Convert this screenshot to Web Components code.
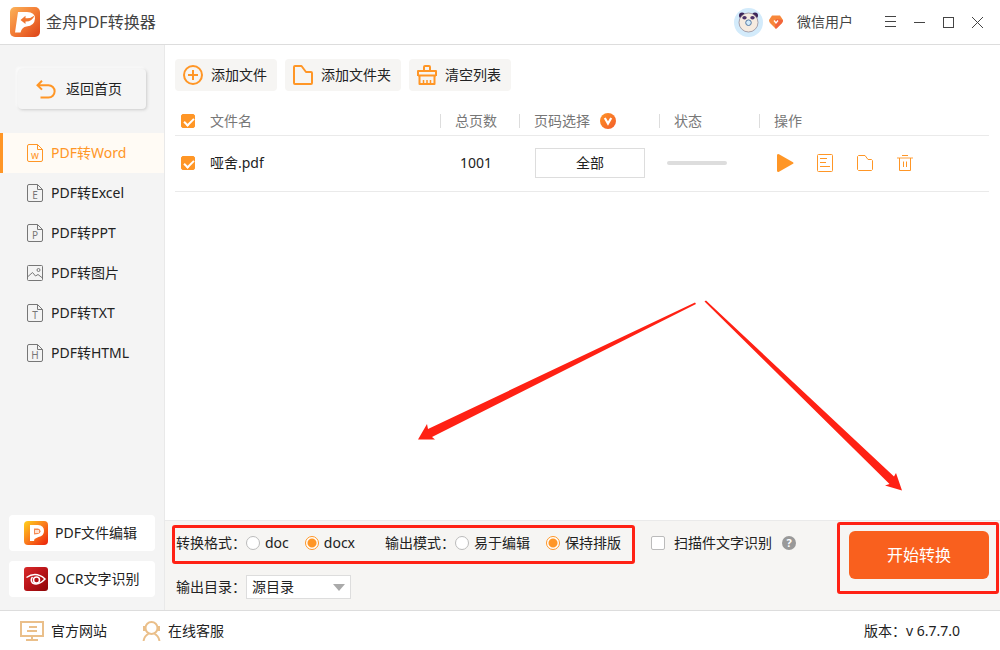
<!DOCTYPE html>
<html lang="zh-CN">
<head>
<meta charset="utf-8">
<meta name="viewport" content="width=device-width, initial-scale=1">
<title>金舟PDF转换器</title>
<style>
  html, body { margin: 0; }
  body {
    font: 14px/20px "Noto Sans", "Noto Sans CJK SC", sans-serif;
    color: #222;
    --accent: #ff9626;
    --action: #f9601e;
    --mark: #ff2114;
    --panel: #f6f5f3;
  }
</style>
</head>
<body>
<app-window></app-window>

<script>
const define = (tag, html, setup) => {
  const template = document.createElement('template');
  template.innerHTML = `<style>*{box-sizing:border-box}button{font:inherit;color:inherit;cursor:pointer}</style>` + html;
  customElements.define(tag, class extends HTMLElement {
    constructor() {
      super();
      this.attachShadow({ mode: 'open' }).append(template.content.cloneNode(true));
    }
    connectedCallback() { if (setup) setup.call(this, this.shadowRoot); }
  });
};

/* ---------- icons ---------- */
const page = letter => [16, 18, `<g fill="none" stroke="currentColor"><path d="M10.500 .5H2Q.5 .5 .5 2V16Q.5 17.500 2 17.500H14Q15.500 17.500 15.500 16V5.500Z"/><path d="M10.500 .5V5.500H15.500"/></g><text x="8" y="15" text-anchor="middle" font-size="10" fill="currentColor">${letter}</text>`];
const ICONS = {
  logo: [30, 30, `<defs><linearGradient id="a" x1="0" y1="0" x2="1" y2="1"><stop stop-color="#fbb35a"/><stop offset=".5" stop-color="#f37c35"/><stop offset="1" stop-color="#dc4218"/></linearGradient></defs><rect width="30" height="30" rx="5" fill="url(#a)"/><path fill="#fff" d="M8 5H17Q25 5 25 11.500Q24.500 19 16.500 19.500Q12 20 10.500 25.500H5Z"/><path fill="#f0752f" d="M10.500 13L15.500 8.800V11.200Q20 12 24.600 8.500Q22 14.800 15.500 14.500V17Z"/>`],
  panda: [29, 29, `<circle cx="14.500" cy="14.500" r="14.500" fill="#d3ebfb"/><circle cx="8" cy="7.500" r="3" fill="#3c2358"/><circle cx="21" cy="7.500" r="3" fill="#3c2358"/><circle cx="14.500" cy="14.500" r="9.500" fill="#f6ebe0" stroke="#8d7f8d" stroke-width=".7"/><ellipse cx="10.500" cy="9.800" rx="2.200" ry="1.800" fill="#4c3268"/><ellipse cx="18.500" cy="9.800" rx="2.200" ry="1.800" fill="#4c3268"/><circle cx="14.500" cy="14.700" r="2.800" fill="#d3ebfb" stroke="#5579a3"/>`],
  gem: [14, 14, `<path fill="#f8873a" d="M3 .5H11L14 5Q14 7 12.500 8.500L8 13Q7 14 6 13L1.500 8.500Q0 7 0 5Z"/><path fill="#f2643c" d="M7 4L14 5Q14 7 12.500 8.500L8 13Q7 14 6 13Z"/><path d="M5 5.500L7 8L9 5.500" fill="none" stroke="#fff" stroke-width="1.300"/>`],
  menu: [11, 12, `<path d="M0 .5H11M0 5.500H11M0 10.500H11" stroke="currentColor"/>`],
  minimize: [11, 11, `<path d="M0 5.500H11" stroke="currentColor"/>`],
  maximize: [11, 11, `<rect x=".5" y=".5" width="10" height="10" fill="none" stroke="currentColor"/>`],
  close: [11, 11, `<path d="M0 0L11 11M11 0L0 11" stroke="currentColor"/>`],
  back: [20, 19, `<path fill="none" stroke="currentColor" stroke-width="2" d="M6 .8L1.500 5.200L6 9.600M1.500 5.200H12.500A6 6 0 0 1 12.500 17.500H4.500"/>`],
  word: page('w'), excel: page('E'), ppt: page('P'), txt: page('T'), html: page('H'),
  image: [16, 16, `<g fill="none" stroke="currentColor"><rect x=".5" y=".5" width="15" height="15" rx="1"/><circle cx="11.500" cy="5" r="1.500"/><path d="M1 11.500L5.500 7.500L8.500 11L11 9.500L15.500 13"/></g>`],
  add: [20, 20, `<g fill="none" stroke="currentColor" stroke-width="2"><circle cx="10" cy="10" r="9"/><path d="M5 10H15M10 5V15"/></g>`],
  folder: [20, 20, `<path fill="none" stroke="currentColor" stroke-width="2" stroke-linejoin="round" d="M1 2Q1 1 2 1H8.500L13 7H18Q19 7 19 8V18Q19 19 18 19H2Q1 19 1 18Z"/>`],
  brush: [20, 20, `<g fill="none" stroke="currentColor" stroke-width="2" stroke-linejoin="round"><path d="M7 6V2Q7 1 8 1H12Q13 1 13 2V6M1 11V6H19V11M1 10.500H19M2.500 11V19H17.500V11"/><path d="M6.500 19V15M10 19V15M13.500 19V15" stroke-width="1.500"/></g>`],
  vip: [16, 16, `<defs><linearGradient id="v" x1="0" y1="0" x2="1" y2="1"><stop stop-color="#ff9426"/><stop offset="1" stop-color="#f25b2a"/></linearGradient></defs><circle cx="8" cy="8" r="8" fill="url(#v)"/><path fill="none" stroke="#fff" stroke-width="2.200" d="M4.800 5L8 10.500L11.200 5"/>`],
  play: [17, 18, `<path fill="currentColor" d="M0 1Q.5 -.3 2 .3L16 8.200Q17 9 16 9.800L2 17.700Q.5 18.300 0 17Z"/>`],
  details: [16, 18, `<g fill="none" stroke="currentColor"><rect x=".5" y=".5" width="15" height="17" rx="1"/><path d="M3 4.500H10M3 8.500H9M3 12.500H13"/></g>`],
  open: [16, 16, `<path fill="none" stroke="currentColor" stroke-linejoin="round" d="M1.500 .5H8L11 4.500H14.500L15.500 5.500V14.500L14.500 15.500H1.500L.5 14.500V1.500Z"/>`],
  trash: [16, 16, `<g fill="none" stroke="currentColor"><path d="M5 .5H11M2.500 3V15.500H13.500V3M6.500 6.500V12M9.500 6.500V12"/><path d="M0 3H16" stroke-width="1.500" opacity=".6"/></g>`],
  editor: [24, 24, `<defs><linearGradient id="e" x1="0" y1="0" x2="1" y2="1"><stop stop-color="#ffd21c"/><stop offset=".5" stop-color="#fa7a1c"/><stop offset="1" stop-color="#ea1e0a"/></linearGradient></defs><rect width="24" height="24" rx="4" fill="url(#e)"/><path fill="#fff" d="M6 4H14Q20 4.500 20 10Q20 15 14.500 16L10.500 18L10 20H6Z"/><path fill="#f58a52" d="M10 7.500H14Q16.500 8 16.500 10.200Q16.500 12.500 14 13L10 13.500Z"/><path fill="#fff" opacity=".75" d="M11 9H15V12H11Z"/>`],
  eye: [24, 24, `<defs><linearGradient id="o" x1="0" y1="0" x2="1" y2="1"><stop stop-color="#d92a2a"/><stop offset=".5" stop-color="#b81318"/><stop offset="1" stop-color="#8c0709"/></linearGradient></defs><rect width="24" height="24" rx="3" fill="url(#o)"/><g fill="none" stroke="#fff" stroke-width="1.500"><path d="M2.500 10.500Q12 4 21 12Q14.500 19 8.500 16Q6 13 8.500 10"/><circle cx="12.500" cy="13" r="3"/></g>`],
  site: [24, 20, `<g fill="none" stroke="currentColor" stroke-width="2"><path d="M1 1H23V15H1ZM12 15V19M6 19H18M9 6H17M7 10H17"/></g>`],
  service: [19, 20, `<g fill="none" stroke="currentColor" stroke-width="2"><circle cx="9.500" cy="7" r="6"/><path d="M1.500 20Q2.500 14.500 6.500 12.800M12.500 12.800Q16.500 14.500 17.500 20"/></g><path fill="currentColor" d="M1 5H3.500V10H1ZM15.500 5H18V10H15.500Z"/>`],
  help: [14, 14, `<circle cx="7" cy="7" r="7" fill="#999"/><text x="7" y="11" text-anchor="middle" font-size="11" font-weight="700" fill="#fff">?</text>`],
};
define('ui-icon', `<style>:host{display:inline-flex;flex:none}svg{display:block}</style>`, function (root) {
  const [w, h, body] = ICONS[this.getAttribute('name')];
  root.innerHTML += `<svg width="${w}" height="${h}" viewBox="0 0 ${w} ${h}" aria-hidden="true">${body}</svg>`;
});

/* ---------- title bar ---------- */
define('title-bar', `
<style>
  :host { display: flex; align-items: center; height: 45px; padding: 0 8px 0 10px; border-bottom: 1px solid #ddd; background: #fff; color: #444; }
  h1 { flex: 1; margin: 0 0 0 6px; font-size: 16px; line-height: 24px; font-weight: 400; }
  .user { display: flex; align-items: center; gap: 6px; margin-right: 23px; }
  .user span { margin-left: 8px; }
  button { display: flex; align-items: center; justify-content: center; width: 29px; height: 28px; padding: 0; border: 0; background: none; }
</style>
<ui-icon name="logo"></ui-icon>
<h1>金舟PDF转换器</h1>
<div class="user"><ui-icon name="panda"></ui-icon><ui-icon name="gem"></ui-icon><span>微信用户</span></div>
<button aria-label="菜单"><ui-icon name="menu"></ui-icon></button>
<button aria-label="最小化"><ui-icon name="minimize"></ui-icon></button>
<button aria-label="最大化"><ui-icon name="maximize"></ui-icon></button>
<button aria-label="关闭"><ui-icon name="close"></ui-icon></button>`);

/* ---------- sidebar ---------- */
define('nav-item', `
<style>
  :host { display: block; }
  a { display: flex; align-items: center; gap: 8px; height: 40px; padding-left: 24px; border-left: 3px solid transparent; color: #222; text-decoration: none; }
  .icon { display: flex; color: #777; }
  :host([active]) a { background: #fffbf5; border-color: var(--accent); color: var(--accent); }
  :host([active]) .icon { color: inherit; }
</style>
<a href="#"><span class="icon"></span><slot></slot></a>`, function (root) {
  root.querySelector('.icon').innerHTML = `<ui-icon name="${this.getAttribute('icon')}"></ui-icon>`;
});

define('side-bar', `
<style>
  :host { display: flex; flex-direction: column; width: 165px; flex: none; border-right: 1px solid #e9e9e9; background: #f4f4f4; }
  .back { display: flex; align-items: center; gap: 10px; height: 40px; margin: 24px 18px; padding: 0 18px; border: 0; border-radius: 4px; background: #f5f5f5; box-shadow: 1px 1px 3px #ccc, -2px -2px 2px #fbfbfb; }
  .back ui-icon { color: var(--accent); }
  nav { flex: 1; }
  .apps { display: flex; flex-direction: column; gap: 10px; padding: 13px 9px; }
  .apps button { display: flex; align-items: center; gap: 7px; height: 36px; padding: 0 15px; border: 0; border-radius: 4px; background: #fff; white-space: nowrap; }
</style>
<button class="back"><ui-icon name="back"></ui-icon>返回首页</button>
<nav>
  <nav-item icon="word" active>PDF转Word</nav-item>
  <nav-item icon="excel">PDF转Excel</nav-item>
  <nav-item icon="ppt">PDF转PPT</nav-item>
  <nav-item icon="image">PDF转图片</nav-item>
  <nav-item icon="txt">PDF转TXT</nav-item>
  <nav-item icon="html">PDF转HTML</nav-item>
</nav>
<div class="apps">
  <button><ui-icon name="editor"></ui-icon>PDF文件编辑</button>
  <button><ui-icon name="eye"></ui-icon>OCR文字识别</button>
</div>`);

/* ---------- toolbar and file list ---------- */
define('tool-bar', `
<style>
  :host { display: flex; gap: 8px; padding: 14px 10px; }
  button { display: flex; align-items: center; gap: 8px; height: 32px; padding: 0 10px 0 8px; border: 0; border-radius: 4px; background: var(--panel); }
  ui-icon { color: var(--accent); }
</style>
<button><ui-icon name="add"></ui-icon>添加文件</button>
<button><ui-icon name="folder"></ui-icon>添加文件夹</button>
<button><ui-icon name="brush"></ui-icon>清空列表</button>`);

const CHECKBOX = `
  input[type=checkbox] { appearance: none; display: block; flex: none; width: 14px; height: 14px; margin: 0; border: 1px solid #bbb; border-radius: 2px; background: #fff; }
  input[type=checkbox]:checked { border-color: var(--accent); background: var(--accent); }
  input[type=checkbox]:checked::before { content: ""; display: block; width: 8px; height: 4px; margin: 3px 2px; border: solid #fff; border-width: 0 0 2px 2px; transform: rotate(-45deg); }`;

define('file-table', `
<style>
  :host { display: block; padding: 0 11px 0 10px; }
  ${CHECKBOX}
  table { width: 100%; border-collapse: collapse; table-layout: fixed; }
  th, td { padding: 0; text-align: left; font-weight: 400; border-bottom: 1px solid #eaeaea; }
  th { height: 30px; padding-top: 2px; color: #777; }
  td { height: 56px; }
  .check { width: 35px; padding-left: 6px; }
  .pages { width: 79px; } .range { width: 140px; } .state { width: 100px; } .ops { width: 230px; }
  th div { display: flex; align-items: center; gap: 10px; height: 14px; padding-left: 14px; border-left: 1px solid #ddd; }
  td.pages { padding-left: 20px; }
  td.range { padding-left: 16px; }
  .range button { display: block; width: 110px; height: 30px; padding: 0; border: 1px solid #ddd; background: #fff; }
  td.state { padding-left: 8px; }
  progress { appearance: none; display: block; width: 60px; height: 4px; border: 0; border-radius: 2px; background: #ddd; overflow: hidden; }
  progress::-webkit-progress-bar { background: #ddd; }
  td.ops div { display: flex; gap: 16px; padding-left: 14px; color: var(--accent); }
  td.ops button { display: flex; align-items: center; justify-content: center; width: 24px; height: 24px; padding: 0; border: 0; background: none; }
</style>
<table>
  <thead><tr>
    <th class="check"><input type="checkbox" checked aria-label="全选"></th>
    <th>文件名</th>
    <th class="pages"><div>总页数</div></th>
    <th class="range"><div>页码选择<ui-icon name="vip"></ui-icon></div></th>
    <th class="state"><div>状态</div></th>
    <th class="ops"><div>操作</div></th>
  </tr></thead>
  <tbody><tr>
    <td class="check"><input type="checkbox" checked aria-label="选择文件"></td>
    <td>哑舍.pdf</td>
    <td class="pages">1001</td>
    <td class="range"><button>全部</button></td>
    <td class="state"><progress value="0" max="100" aria-label="状态"></progress></td>
    <td class="ops"><div>
      <button aria-label="开始"><ui-icon name="play"></ui-icon></button>
      <button aria-label="详情"><ui-icon name="details"></ui-icon></button>
      <button aria-label="打开文件夹"><ui-icon name="open"></ui-icon></button>
      <button aria-label="删除"><ui-icon name="trash"></ui-icon></button>
    </div></td>
  </tr></tbody>
</table>`);

/* ---------- conversion options ---------- */
define('radio-group', `
<style>
  :host { display: block; }
  fieldset { display: flex; align-items: center; margin: 0; padding: 0; border: 0; min-width: 0; }
  .choices { display: flex; gap: 16px; }
  label { display: flex; align-items: center; gap: 5px; white-space: nowrap; }
  .caption { white-space: nowrap; }
  input { appearance: none; width: 14px; height: 14px; margin: 0; border: 1px solid #bbb; border-radius: 50%; background: #fff; }
  input:checked { border-color: var(--accent); background: radial-gradient(circle, var(--accent) 4px, #fff 5px); }
</style>
<fieldset><span class="caption"><slot></slot></span><div class="choices"></div></fieldset>`, function (root) {
  root.querySelector('fieldset').setAttribute('aria-label', this.textContent);
  root.querySelector('.choices').innerHTML = this.getAttribute('options').split(',').map(o =>
    `<label><input type="radio" name="choice" value="${o}"${o === this.getAttribute('value') ? ' checked' : ''}>${o}</label>`).join('');
});

/* Red frame drawn around whatever is slotted in. */
define('mark-frame', `
<style>
  :host { display: flex; position: relative; }
  i { position: absolute; inset: var(--frame-inset); border: 3px solid var(--mark); border-radius: 3px; pointer-events: none; }
</style>
<slot></slot><i></i>`);

define('options-panel', `
<style>
  :host { display: flex; align-items: flex-start; justify-content: space-between; height: 90px; padding: 10px 11px 0; border-top: 1px solid #eaeaea; background: var(--panel); }
  ${CHECKBOX}
  .settings { display: flex; flex-direction: column; gap: 20px; }
  .row { display: flex; align-items: center; height: 24px; }
  .formats { gap: 30px; --frame-inset: -8px -14px -11px -4px; }
  .scan { display: flex; align-items: center; gap: 9px; margin: 0 10px 0 30px; white-space: nowrap; }
  .select { position: relative; }
  select { appearance: none; display: block; width: 105px; height: 24px; padding: 0 5px; border: 1px solid #ddd; border-radius: 0; background: #fff; color: inherit; font: inherit; }
  .select svg { position: absolute; right: 6px; top: 9px; pointer-events: none; }
  .start { --frame-inset: -9px -10px -15px -12px; }
  .start button { width: 140px; height: 48px; padding: 0; border: 0; border-radius: 6px; background: var(--action); color: #fff; font-size: 16px; }
</style>
<div class="settings">
  <div class="row">
    <mark-frame class="formats">
      <radio-group options="doc,docx" value="docx">转换格式：</radio-group>
      <radio-group options="易于编辑,保持排版" value="保持排版">输出模式：</radio-group>
    </mark-frame>
    <label class="scan"><input type="checkbox">扫描件文字识别</label>
    <ui-icon name="help"></ui-icon>
  </div>
  <div class="row">
    <label for="dir">输出目录：</label>
    <div class="select">
      <select id="dir"><option>源目录</option></select>
      <svg width="12" height="7" viewBox="0 0 12 7" aria-hidden="true"><path d="M0 0H12L6 7Z" fill="#aaa"/></svg>
    </div>
  </div>
</div>
<mark-frame class="start"><button>开始转换</button></mark-frame>`);

/* ---------- pointer arrows over the empty part of the list ---------- */
define('pointer-arrows', `
<style>
  :host { display: block; position: absolute; inset: 0; pointer-events: none; }
  svg { display: block; width: 100%; height: 100%; fill: var(--mark); }
</style>
<svg viewBox="165 45 835 475" preserveAspectRatio="xMaxYMax meet" aria-hidden="true">
  <path d="M695 302.500L696 304L432 437L435 439.500L418 439.500L427 424L428 429Z"/>
  <path d="M704.500 301.500L706 300.500L894 476.500L896 473L902 490.500L885 485.500L889.500 484Z"/>
</svg>`);

/* ---------- footer ---------- */
define('app-footer', `
<style>
  :host { display: flex; align-items: center; gap: 35px; height: 40px; padding: 0 40px 0 20px; border-top: 1px solid #ddd; background: #fff; }
  a { display: flex; align-items: center; gap: 7px; color: inherit; text-decoration: none; }
  ui-icon { color: #eabf8a; }
  span { margin-left: auto; }
</style>
<a href="#"><ui-icon name="site"></ui-icon>官方网站</a>
<a href="#"><ui-icon name="service"></ui-icon>在线客服</a>
<span>版本：v 6.7.7.0</span>`);

define('app-window', `
<style>
  :host { display: flex; flex-direction: column; min-height: 100vh; background: #fff; }
  .body { display: flex; flex: 1; }
  main { display: flex; flex-direction: column; flex: 1; min-width: 0; }
  .files { flex: 1; position: relative; }
</style>
<title-bar></title-bar>
<div class="body">
  <side-bar></side-bar>
  <main>
    <div class="files"><tool-bar></tool-bar><file-table></file-table><pointer-arrows></pointer-arrows></div>
    <options-panel></options-panel>
  </main>
</div>
<app-footer></app-footer>`);
</script>
</body>
</html>
